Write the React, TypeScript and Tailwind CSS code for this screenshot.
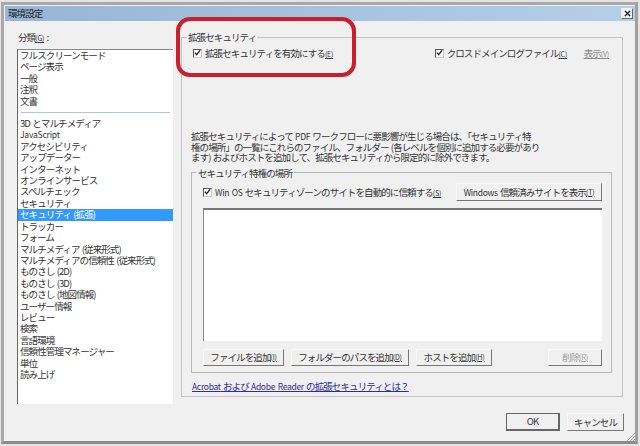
import React from 'react';

const font = { fontFamily: '"Noto Sans CJK JP", "Liberation Sans", sans-serif' };

const topItems = ['フルスクリーンモード', 'ページ表示', '一般', '注釈', '文書'];
const mainItems = [
  '3D とマルチメディア', 'JavaScript', 'アクセシビリティ', 'アップデーター', 'インターネット',
  'オンラインサービス', 'スペルチェック', 'セキュリティ', 'セキュリティ (拡張)', 'トラッカー', 'フォーム',
  'マルチメディア (従来形式)', 'マルチメディアの信頼性 (従来形式)', 'ものさし (2D)', 'ものさし (3D)',
  'ものさし (地図情報)', 'ユーザー情報', 'レビュー', '検索', '言語環境', '信頼性管理マネージャー', '単位', '読み上げ',
];

// accelerator key, drawn smaller than the label as in the dialog
const Acc = ({ k }: { k: string }) => (
  <span className="text-[7px] tracking-[-0.2px] underline">({k})</span>
);

const Latin = ({ children }: { children: React.ReactNode }) => (
  <span className="text-[8.5px] tracking-[-0.3px]">{children}</span>
);

const CheckBox = () => (
  <span className="flex h-[9px] w-[9px] shrink-0 items-center justify-center border-t border-l border-t-[#555] border-l-[#555] border-r border-b border-r-[#ccc] border-b-[#ccc] bg-white">
    <svg viewBox="0 0 8 8" className="h-[8px] w-[8px]">
      <path d="M1 3.5 L3 6 L7 1" fill="none" stroke="#222" strokeWidth="1.5" />
    </svg>
  </span>
);

const Button = ({ className, disabled, children }: { className: string; disabled?: boolean; children: React.ReactNode }) => (
  <div className={`flex items-center justify-center whitespace-pre border border-t-[#f8f8f8] border-l-[#f8f8f8] border-r-[#777] border-b-[#777] bg-[#f0f0f0] ${disabled ? 'text-[#a0a0a0]' : 'text-[#333]'} ${className}`}>
    {children}
  </div>
);

export default function App() {
  return (
    <div style={font} className="relative h-[446px] w-[640px] overflow-hidden bg-[#e4e4e4] pt-[2px] pr-[2px] pb-[2px] pl-[1px] text-[9.5px] tracking-[-0.9px] text-[#333] [word-spacing:1px]">
      <div className="flex h-full w-full flex-col border-[3px] border-[#a8a8a8] border-b-[#8c8c8c] border-r-[#a0a0a0] bg-[#f0f0f0]">
        {/* title bar */}
        <div className="ml-[1px] mt-[1px] flex h-[15px] items-center justify-between bg-gradient-to-r from-[#97b5d6] to-[#b5cfea] pl-[3px] pr-[2px] leading-none text-[#222]">
          <span>環境設定</span>
          <div className="flex h-[11px] w-[12px] items-center justify-center border border-t-[#eee] border-l-[#eee] border-r-[#666] border-b-[#666] bg-[#f0f0f0]">
            <svg viewBox="0 0 8 8" className="h-[7px] w-[7px]">
              <path d="M1 1 L7 7 M7 1 L1 7" stroke="#111" strokeWidth="1.6" />
            </svg>
          </div>
        </div>

        <div className="flex items-start pl-[13px] pt-[10px]">
          {/* left category list */}
          <div className="w-[156px] shrink-0">
            <div className="h-[12px] pl-[1px] leading-[12px]">分類<Acc k="G" /> :</div>
            <div className="mt-[6px] h-[355px] border-t border-l border-t-[#8a8a8a] border-l-[#666] bg-white leading-[11.41px]">
              {topItems.map(item => (
                <div key={item} className="h-[11.41px] whitespace-nowrap pl-[2px]">{item}</div>
              ))}
              <div className="mx-[3px] mt-[5px] mb-[5px] h-[1px] bg-[#a8c8dc]" />
              {mainItems.map(item => (
                <div
                  key={item}
                  className={`h-[11.41px] whitespace-nowrap pl-[2px] ${item === 'セキュリティ (拡張)' ? 'bg-[#3399ff] text-white' : ''} ${item === 'JavaScript' ? 'text-[8.5px] tracking-[-0.2px]' : ''}`}
                >
                  {item}
                </div>
              ))}
            </div>
          </div>

          {/* right panel */}
          <fieldset className="ml-[8px] h-[366px] w-[442px] min-w-0 border border-[#c4c4c4] pl-[9px] pr-[9px]">
            <legend className="ml-[-4px] px-[1px] leading-[12px]">拡張セキュリティ</legend>
            <div className="mt-[4px] flex h-[12px] items-center">
              <div className="ml-[2px] flex items-center gap-[3px]">
                <CheckBox />
                <span className="whitespace-nowrap">拡張セキュリティを有効にする<Acc k="E" /></span>
              </div>
              <div className="ml-auto flex items-center gap-[3px]">
                <CheckBox />
                <span className="w-[137px] whitespace-nowrap">クロスドメインログファイル<Acc k="C" /></span>
              </div>
              <span className="mr-[4px] whitespace-nowrap text-[#8a8a8a] underline">表示<Acc k="V" /></span>
            </div>

            <p className="mt-[72px] whitespace-nowrap leading-[10.5px]">
              拡張セキュリティによって <Latin>PDF</Latin> ワークフローに悪影響が生じる場合は、「セキュリティ特<br />
              権の場所」の一覧にこれらのファイル、フォルダー (各レベルを個別に追加する必要があり<br />
              ます) およびホストを追加して、拡張セキュリティから限定的に除外できます。
            </p>

            <fieldset className="mt-[4px] h-[206px] w-[421px] min-w-0 border border-[#b8b8b8] pl-[11px] pr-[9px]">
              <legend className="ml-[-7px] px-[2px] leading-[12px]">セキュリティ特権の場所</legend>
              <div className="mt-[5px] flex h-[17px] items-center">
                <CheckBox />
                <span className="ml-[3px] whitespace-nowrap"><Latin>Win OS</Latin> セキュリティゾーンのサイトを自動的に信頼する<Acc k="S" /></span>
                <Button className="ml-auto h-[18px] w-[146px]"><Latin>Windows</Latin> 信頼済みサイトを表示<Acc k="T" /></Button>
              </div>
              <div className="mt-[7px] h-[133px] border-t-2 border-l border-t-[#777] border-l-[#888] bg-white" />
              <div className="mt-[8px] flex h-[17px]">
                <Button className="w-[81px]">ファイルを追加<Acc k="I" /></Button>
                <Button className="ml-[7px] w-[118px]">フォルダーのパスを追加<Acc k="D" /></Button>
                <Button className="ml-[7px] w-[76px]">ホストを追加<Acc k="H" /></Button>
                <Button disabled className="ml-auto w-[54px]">削除<Acc k="R" /></Button>
              </div>
            </fieldset>

            <div className="mt-[7px] whitespace-nowrap pl-[1px] leading-[12px] text-[#2c2c9c] underline">
              <Latin>Acrobat</Latin> および <Latin>Adobe Reader</Latin> の拡張セキュリティとは？
            </div>
          </fieldset>
        </div>

        {/* dialog buttons */}
        <div className="mt-[9px] flex justify-end pr-[11px]">
          <div className="flex h-[18px] w-[54px] items-center justify-center border border-[#666] border-r-2 border-b-2 bg-[#f0f0f0]">OK</div>
          <Button className="ml-[7px] h-[18px] w-[57px]">キャンセル</Button>
        </div>
      </div>

      {/* red highlight drawn on the screenshot */}
      <div className="absolute left-[176px] top-[17px] h-[60px] w-[180px] rounded-[14px] border-[4px] border-[#c8202c]" />

      {/* resize grip */}
      <svg viewBox="0 0 8 8" className="absolute left-[627px] top-[433px] h-[8px] w-[8px]">
        <path d="M0 8 L8 0 M3 8 L8 3 M6 8 L8 6" stroke="#999" strokeWidth="1" />
      </svg>
    </div>
  );
}
